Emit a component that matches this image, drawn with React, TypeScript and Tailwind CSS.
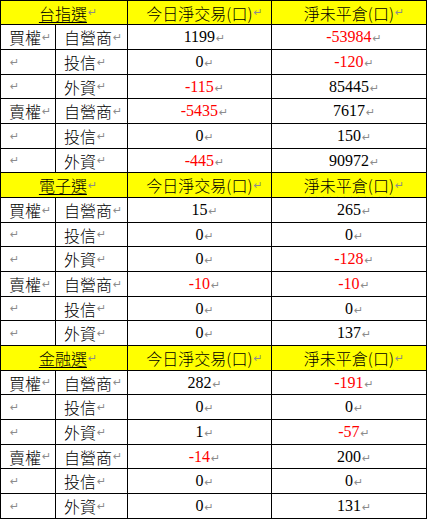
import React from 'react'

type Row = { side: string; who: string; today: number; open: number }
type Section = { name: string; wavy?: boolean; rows: Row[] }

const sections: Section[] = [
  {
    name: '台指選',
    wavy: true,
    rows: [
      { side: '買權', who: '自營商', today: 1199, open: -53984 },
      { side: '', who: '投信', today: 0, open: -120 },
      { side: '', who: '外資', today: -115, open: 85445 },
      { side: '賣權', who: '自營商', today: -5435, open: 7617 },
      { side: '', who: '投信', today: 0, open: 150 },
      { side: '', who: '外資', today: -445, open: 90972 },
    ],
  },
  {
    name: '電子選',
    rows: [
      { side: '買權', who: '自營商', today: 15, open: 265 },
      { side: '', who: '投信', today: 0, open: 0 },
      { side: '', who: '外資', today: 0, open: -128 },
      { side: '賣權', who: '自營商', today: -10, open: -10 },
      { side: '', who: '投信', today: 0, open: 0 },
      { side: '', who: '外資', today: 0, open: 137 },
    ],
  },
  {
    name: '金融選',
    rows: [
      { side: '買權', who: '自營商', today: 282, open: -191 },
      { side: '', who: '投信', today: 0, open: 0 },
      { side: '', who: '外資', today: 1, open: -57 },
      { side: '賣權', who: '自營商', today: -14, open: 200 },
      { side: '', who: '投信', today: 0, open: 0 },
      { side: '', who: '外資', today: 0, open: 131 },
    ],
  },
]

// row heights repeat 23/24/24 so the grid lines land where the reference has them
const heights = ['h-[23px]', 'h-[24px]', 'h-[24px]']

const cjk = "font-['Noto_Sans_CJK_TC','Noto_Sans_CJK_SC',sans-serif] font-light"
const serif = "font-['Liberation_Serif','Times_New_Roman',serif]"
const cell = 'overflow-hidden leading-none flex items-center'
const wavy = 'underline decoration-wavy decoration-[#4caf50] decoration-1 underline-offset-[4px]'

function Mark() {
  return <span className="ml-px text-[11px] leading-none font-normal text-[#8c8c8c] font-['DejaVu_Sans',sans-serif]">↵</span>
}

function Num({ v }: { v: number }) {
  return (
    <span className={`${serif} text-[16px] ${v < 0 ? 'text-[#ff0000]' : 'text-black'}`}>
      {v}
      <Mark />
    </span>
  )
}

export default function App() {
  let r = 0
  const rowCls = () =>
    `grid grid-cols-[54px_71px_143px_154px] grid-rows-[100%] gap-px ${heights[r++ % 3]}`

  return (
    <div className="w-[427px] bg-black p-px flex flex-col gap-px text-black">
      {sections.map((s) => (
        <React.Fragment key={s.name}>
          <div className={rowCls()}>
            <div className={`${cell} col-span-2 bg-[#ffff00] justify-center pl-2 ${cjk} text-[16px]`}>
              <span className={s.wavy ? wavy : ''}>
                <span className="underline decoration-black decoration-1 underline-offset-[2px]">{s.name}</span>
              </span>
              <Mark />
            </div>
            <div className={`${cell} bg-[#ffff00] justify-center pl-[10px] ${cjk} text-[16px]`}>
              今日淨交易(口)
              <Mark />
            </div>
            <div className={`${cell} bg-[#ffff00] justify-center pl-[10px] ${cjk} text-[16px]`}>
              <span className={wavy}>淨未平倉(口)</span>
              <Mark />
            </div>
          </div>
          {s.rows.map((row, i) => (
            <div key={i} className={rowCls()}>
              <div className={`${cell} bg-white pl-2 ${cjk} text-[16px]`}>
                {row.side}
                <Mark />
              </div>
              <div className={`${cell} bg-white pl-2 ${cjk} text-[16px]`}>
                {row.who}
                <Mark />
              </div>
              <div className={`${cell} bg-white justify-center pl-[10px]`}>
                <Num v={row.today} />
              </div>
              <div className={`${cell} bg-white justify-center pl-[10px]`}>
                <Num v={row.open} />
              </div>
            </div>
          ))}
        </React.Fragment>
      ))}
    </div>
  )
}
